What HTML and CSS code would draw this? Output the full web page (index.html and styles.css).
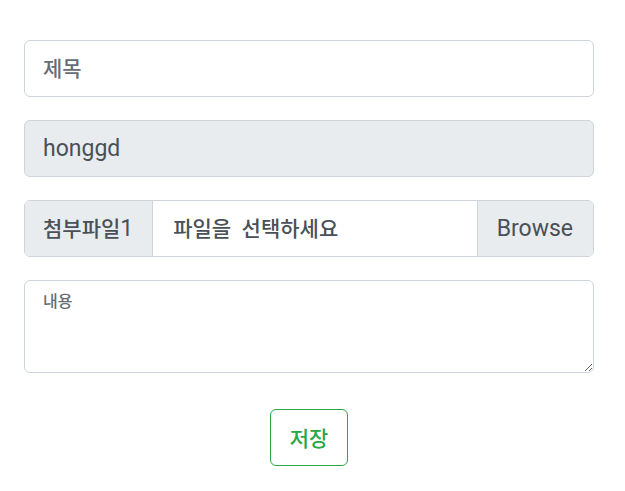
FILE: index.html
```html
<!DOCTYPE html>
<html lang="ko">
<head>
<meta charset="utf-8">
<title>글쓰기</title>
<link rel="stylesheet" href="styles.css">
</head>
<body>
<form class="write-form">
  <div class="form-group">
    <input class="form-control" type="text" placeholder="제목">
  </div>
  <div class="form-group">
    <input class="form-control" type="text" value="honggd" disabled>
  </div>
  <div class="form-group input-group">
    <span class="input-prepend"><span class="ko">첨부파일</span>1</span>
    <label class="file-label"><span class="ko">파일을&nbsp; 선택하세요</span></label>
    <span class="file-browse">Browse</span>
  </div>
  <div class="form-group">
    <textarea class="form-control text-area" placeholder="내용"></textarea>
  </div>
  <div class="actions">
    <button type="button" class="btn-save"><span class="ko">저장</span></button>
  </div>
</form>
</body>
</html>
```

FILE: styles.css
```css
* { box-sizing: border-box; }

body {
  margin: 0;
  padding: 40px 31px 0 24px;
  background: #ffffff;
  font-family: Roboto, "Noto Sans CJK KR", sans-serif;
  font-size: 23px;
  color: #495057;
}

.write-form {
  display: flex;
  flex-direction: column;
  gap: 23px;
}

.ko {
  display: inline-block;
  font-size: 21px;
  font-weight: 500;
  margin-bottom: 4px;
}

.form-control {
  display: block;
  width: 100%;
  height: 57px;
  padding: 0 18px;
  font-family: inherit;
  font-size: 23px;
  color: #495057;
  background: #ffffff;
  border: 1px solid #ced4da;
  border-radius: 6px;
  outline: none;
}

.form-control::placeholder {
  color: #666d75;
  font-size: 21px;
  font-weight: 500;
  opacity: 1;
}

.form-control:disabled {
  background: #e9ecef;
  color: #495057;
  opacity: 1;
}

.input-group {
  display: flex;
  height: 57px;
  border: 1px solid #ced4da;
  border-radius: 6px;
  overflow: hidden;
}

.input-prepend {
  display: flex;
  align-items: center;
  padding: 0 19px 0 18px;
  background: #e9ecef;
  border-right: 1px solid #ced4da;
  white-space: nowrap;
}

.file-label {
  flex: 1;
  display: flex;
  align-items: center;
  padding: 0 20px;
  background: #ffffff;
  white-space: nowrap;
}

.file-browse {
  display: flex;
  align-items: center;
  padding: 0 20px 0 19px;
  background: #e9ecef;
  border-left: 1px solid #ced4da;
}

.text-area {
  height: 93px;
  padding: 9px 18px;
  font-size: 16px;
  line-height: 24px;
  resize: vertical;
}

.text-area::placeholder {
  font-size: 16px;
  font-weight: 500;
}

.actions {
  display: flex;
  justify-content: center;
  margin-top: 13px;
}

.btn-save {
  display: flex;
  align-items: center;
  height: 57px;
  padding: 0 19px;
  font-family: inherit;
  color: #28a745;
  background: #ffffff;
  border: 1px solid #28a745;
  border-radius: 6px;
  cursor: pointer;
}

.btn-save .ko {
  margin-bottom: 2px;
}
```
